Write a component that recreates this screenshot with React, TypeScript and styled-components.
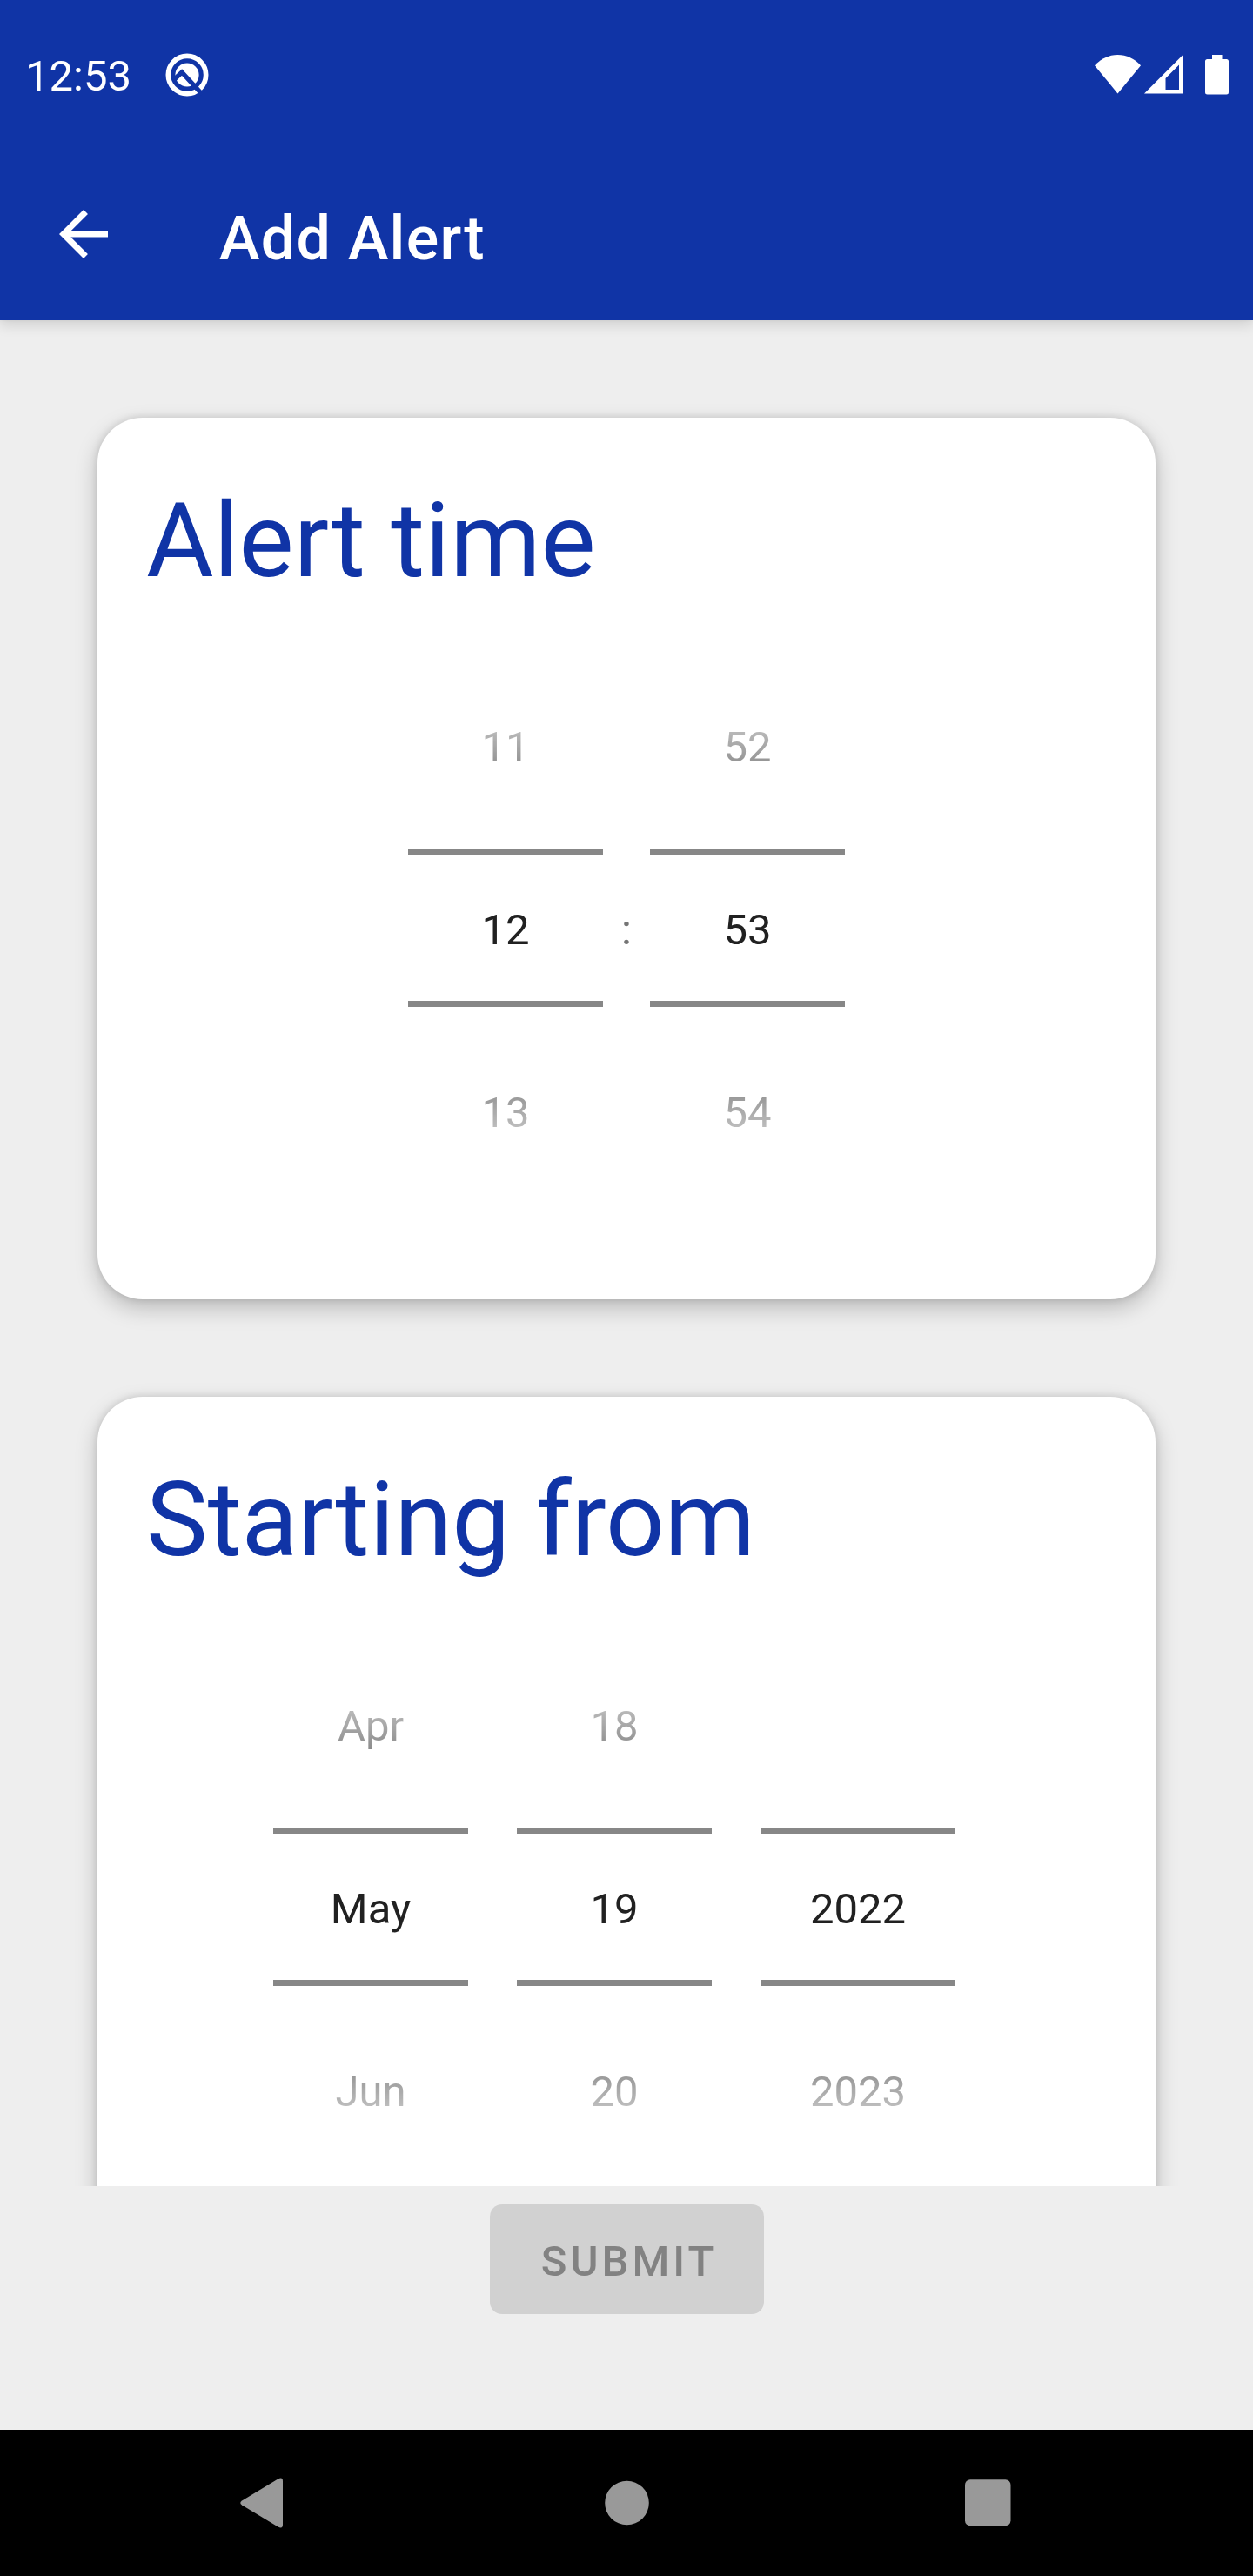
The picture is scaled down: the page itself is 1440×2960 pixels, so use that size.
import React from "react";
import styled, { createGlobalStyle } from "styled-components";

const GlobalStyle = createGlobalStyle`
  *, *::before, *::after { box-sizing: border-box; }
  html, body { margin: 0; padding: 0; }
  body { font-family: Roboto, "Liberation Sans", sans-serif; background: #eeeeee; }
`;

const Screen = styled.div`
  width: 1440px;
  height: 2960px;
  display: flex;
  flex-direction: column;
  overflow: hidden;
  background: #eeeeee;
`;

const Header = styled.header`
  position: relative;
  z-index: 1;
  flex: none;
  height: 368px;
  color: #ffffff;
  background: #1034a6;
  box-shadow: 0 6px 14px rgba(0, 0, 0, 0.12), 0 0 4px rgba(0, 0, 0, 0.06);
`;

const StatusBar = styled.div`
  height: 172px;
  padding: 0 28px 0 29px;
  display: flex;
  align-items: center;
  justify-content: space-between;
`;

const StatusLeft = styled.div`
  display: flex;
  align-items: center;
  gap: 39px;
`;

const StatusIcons = styled.div`
  display: flex;
  align-items: flex-start;
  gap: 4px;
  height: 46px;
`;

const BatterySlot = styled.span`
  padding-left: 21px;
`;

const Clock = styled.span`
  padding-top: 3px;
  font-size: 49px;
  line-height: 58px;
`;

const Toolbar = styled.div`
  height: 196px;
  padding-left: 54px;
  display: flex;
  align-items: center;
`;

const BackButton = styled.button`
  width: 84px;
  height: 84px;
  margin: 0 114px 3px 0;
  padding: 0;
  border: 0;
  background: none;
  color: inherit;
`;

const Title = styled.h1`
  margin: 7px 0 0;
  font-size: 70px;
  font-weight: 500;
  line-height: 82px;
  letter-spacing: 1.3px;
`;

const Scroller = styled.main`
  flex: none;
  height: 2144px;
  padding: 112px 112px 0;
  display: flex;
  flex-direction: column;
  gap: 112px;
  overflow: hidden;
`;

const Card = styled.section`
  flex: none;
  height: 1013px;
  border-radius: 52px;
  background: #ffffff;
  box-shadow: 0 10px 26px rgba(0, 0, 0, 0.22), 0 0 10px rgba(0, 0, 0, 0.13);
`;

const CardTitle = styled.h2`
  margin: 0;
  padding: 72px 56px 0;
  height: 271px;
  color: #1034a6;
  font-size: 119px;
  font-weight: 400;
  line-height: 140px;
  white-space: nowrap;
`;

const Pickers = styled.div<{ $gap: number; $shift?: number }>`
  display: flex;
  justify-content: center;
  gap: ${(p) => p.$gap}px;
  padding-right: ${(p) => p.$shift ?? 0}px;
`;

const Wheel = styled.div`
  width: 224px;
  height: 630px;
  display: flex;
  flex-direction: column;
  color: #212121;
  font-size: 49px;
  line-height: 58px;
  text-align: center;
`;

const Neighbour = styled.div<{ $side: "before" | "after" }>`
  height: 224px;
  padding-top: ${(p) => (p.$side === "before" ? 79 : 93)}px;
  mask-image: linear-gradient(
    ${(p) => (p.$side === "before" ? "to bottom" : "to top")},
    rgba(0, 0, 0, 0) 20px,
    rgba(0, 0, 0, 0.93) 100%
  );
`;

const Selected = styled.div`
  height: 182px;
  padding-top: 58px;
  border: solid #878787;
  border-width: 7px 0;
`;

const Colon = styled.span`
  width: 14px;
  padding-top: 289px;
  color: #757575;
  font-size: 49px;
  line-height: 58px;
  text-align: center;
`;

const Footer = styled.footer`
  flex: 1;
  padding-top: 21px;
  display: flex;
  justify-content: center;
  align-items: flex-start;
`;

const SubmitButton = styled.button`
  width: 315px;
  height: 126px;
  padding: 6px 0 0 6px;
  border: 0;
  border-radius: 14px;
  background: #d1d1d1;
  color: #828282;
  font-family: inherit;
  font-size: 49px;
  font-weight: 500;
  line-height: 58px;
  letter-spacing: 4px;
`;

const NavBar = styled.nav`
  flex: none;
  height: 168px;
  display: flex;
  align-items: center;
  justify-content: space-between;
  padding: 0 263px 0 260px;
  background: #000000;
`;

const Icon = styled.svg`
  display: block;
  flex: none;
`;

type WheelValues = [string, string, string];

function PickerWheel({ values }: { values: WheelValues }) {
  const [before, current, after] = values;
  return (
    <Wheel>
      <Neighbour $side="before">{before}</Neighbour>
      <Selected>{current}</Selected>
      <Neighbour $side="after">{after}</Neighbour>
    </Wheel>
  );
}

function AndroidQIcon() {
  return (
    <Icon width="50" height="50" viewBox="0 0 50 50">
      <circle cx="25" cy="25" r="21.65" fill="none" stroke="#fff" strokeWidth="5.7" />
      <circle cx="25" cy="25" r="13.6" fill="#fff" />
      <path d="M9 31.5L19 22L42.500 47.5" fill="none" stroke="#1034a6" strokeWidth="5.4" />
    </Icon>
  );
}

function WifiIcon() {
  return (
    <Icon width="53" height="45" viewBox="0 0 53 45">
      <path d="M0 12.2C7 4.6 16.5 0 26.5 0S46 4.6 53 12.2L26.5 44.5Z" fill="#fff" />
    </Icon>
  );
}

function SignalIcon() {
  return (
    <Icon width="45" height="45" viewBox="0 0 45 45">
      <path fillRule="evenodd" d="M44.5 0V44.5H0ZM40 11.5L24.5 27V40H40Z" fill="#fff" />
    </Icon>
  );
}

function BatteryIcon() {
  return (
    <Icon width="27" height="46" viewBox="0 0 27 46">
      <path
        d="M8 0H19.5V5H24.5Q27 5 27 7.5V43Q27 45.5 24.5 45.5H2.5Q0 45.5 0 43V7.5Q0 5 2.5 5H8Z"
        fill="#fff"
      />
    </Icon>
  );
}

export default function App() {
  return (
    <>
      <GlobalStyle />
      <Screen>
        <Header>
          <StatusBar>
            <StatusLeft>
              <Clock>12:53</Clock>
              <AndroidQIcon />
            </StatusLeft>
            <StatusIcons>
              <WifiIcon />
              <SignalIcon />
              <BatterySlot>
                <BatteryIcon />
              </BatterySlot>
            </StatusIcons>
          </StatusBar>
          <Toolbar>
            <BackButton aria-label="Navigate up">
              <Icon width="84" height="84" viewBox="0 0 24 24" fill="currentColor">
                <path d="M20 11H7.83l5.59-5.59L12 4l-8 8 8 8 1.41-1.41L7.83 13H20v-2z" />
              </Icon>
            </BackButton>
            <Title>Add Alert</Title>
          </Toolbar>
        </Header>
        <Scroller>
          <Card>
            <CardTitle>Alert time</CardTitle>
            <Pickers $gap={20}>
              <PickerWheel values={["11", "12", "13"]} />
              <Colon>:</Colon>
              <PickerWheel values={["52", "53", "54"]} />
            </Pickers>
          </Card>
          <Card>
            <CardTitle>Starting from</CardTitle>
            <Pickers $gap={56} $shift={28}>
              <PickerWheel values={["Apr", "May", "Jun"]} />
              <PickerWheel values={["18", "19", "20"]} />
              <PickerWheel values={["", "2022", "2023"]} />
            </Pickers>
          </Card>
        </Scroller>
        <Footer>
          <SubmitButton disabled>SUBMIT</SubmitButton>
        </Footer>
        <NavBar>
          <Icon width="80" height="80" viewBox="0 0 80 80">
            <path
              d="M18 37.5L59.500 12.6Q65 9.800 65 15V65Q65 70.2 59.500 67.4L18 42.5Q14.500 40 18 37.5Z"
              fill="#999"
            />
          </Icon>
          <Icon width="80" height="80" viewBox="0 0 80 80">
            <circle cx="41.5" cy="40" r="25.3" fill="#999" />
          </Icon>
          <Icon width="80" height="80" viewBox="0 0 80 80">
            <rect x="12" y="13.3" width="52.500" height="53" rx="6" fill="#999" />
          </Icon>
        </NavBar>
      </Screen>
    </>
  );
}
